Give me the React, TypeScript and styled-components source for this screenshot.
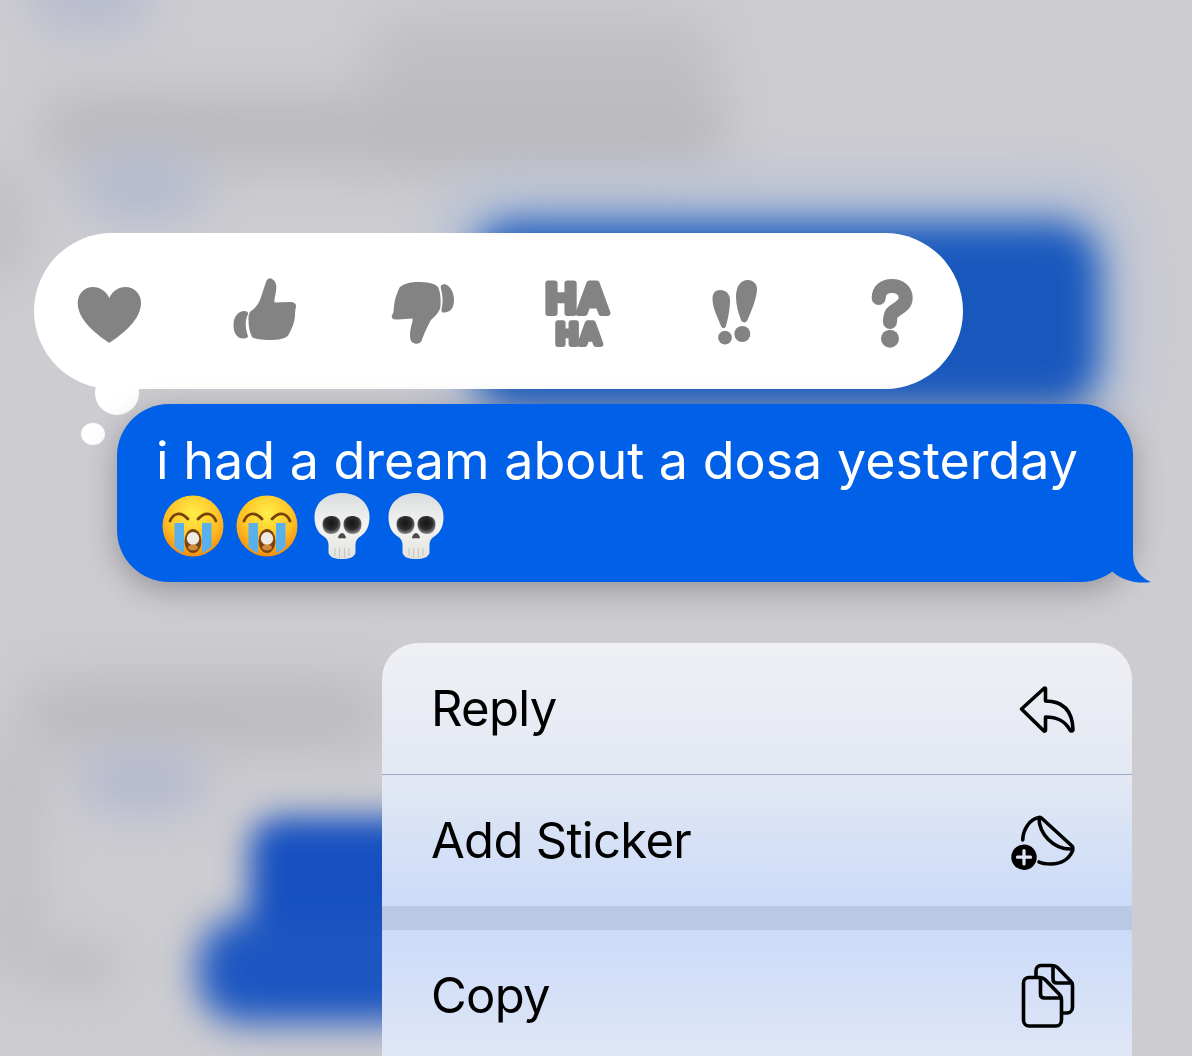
import React from "react";
import styled, { createGlobalStyle } from "styled-components";

const Global = createGlobalStyle`
  html, body { margin: 0; padding: 0; background: #cdccd1; }
  #root { width: 1192px; height: 1056px; overflow: hidden; }
`;

const Page = styled.div`
  position: relative;
  width: 1192px;
  height: 1056px;
  overflow: hidden;
  background: #cdccd1;
  font-family: Inter, "Liberation Sans", sans-serif;
`;

const Backdrop = styled.div`
  position: absolute;
  inset: 0;
  overflow: hidden;
`;

const Blob = styled.div<{ $x: number; $y: number; $w: number; $h: number; $c: string; $b: number; $r?: number }>`
  position: absolute;
  left: ${(p) => p.$x}px;
  top: ${(p) => p.$y}px;
  width: ${(p) => p.$w}px;
  height: ${(p) => p.$h}px;
  background: ${(p) => p.$c};
  filter: blur(${(p) => p.$b}px);
  border-radius: ${(p) => p.$r ?? 30}px;
`;

const Foreground = styled.div`
  position: relative;
  display: flex;
  flex-direction: column;
  align-items: flex-start;
  padding: 233px 0 0 34px;
`;

const Tapbacks = styled.div`
  position: relative;
  box-sizing: border-box;
  display: flex;
  align-items: center;
  gap: 84px;
  width: 929px;
  height: 156px;
  padding: 2px 0 0 40px;
  border-radius: 78px;
  background: #fff;
`;

const TapIcon = styled.svg`
  display: block;
  width: 72px;
  height: 72px;
  flex: none;
  overflow: visible;
  fill: #838383;
  will-change: transform;
`;

const HaText = styled.text`
  font-family: "Liberation Sans", Arial, sans-serif;
  font-weight: 700;
  fill: #838383;
  stroke: #838383;
  stroke-width: 6px;
  stroke-linejoin: round;
  text-rendering: geometricPrecision;
`;

const ThoughtLarge = styled.div`
  position: absolute;
  left: 61px;
  top: 138px;
  width: 44px;
  height: 44px;
  border-radius: 50%;
  background: #fff;
`;

const ThoughtSmall = styled.div`
  position: absolute;
  left: 47px;
  top: 190px;
  width: 24px;
  height: 22px;
  border-radius: 50%;
  background: #fff;
`;

const Bubble = styled.div`
  position: relative;
  box-sizing: border-box;
  width: 1016px;
  height: 178px;
  margin: 15px 0 0 83px;
  padding: 27px 0 0 39px;
  border-radius: 52px;
  background: #0060e8;
  box-shadow: 0 8px 30px rgba(40, 40, 50, 0.34);
  color: #fff;
`;

const BubbleText = styled.div`
  font-size: 52px;
  line-height: 60px;
  letter-spacing: 0;
  white-space: nowrap;
`;

const EmojiRow = styled.div`
  display: flex;
  gap: 12.5px;
  margin: 1px 0 0 5.5px;
`;

const EmojiIcon = styled.svg`
  display: block;
  width: 62px;
  height: 68px;
  flex: none;
`;

const Tail = styled.svg`
  position: absolute;
  left: 988px;
  top: 131px;
  width: 48px;
  height: 49px;
  overflow: visible;
  fill: #0060e8;
`;

const Menu = styled.div`
  width: 750px;
  height: 413px;
  margin: 61px 0 0 348px;
  border-radius: 36px 36px 0 0;
  overflow: hidden;
  background: linear-gradient(180deg, #eff0f4 0, #e3e8f3 131px, #cbdbf9 263px, #cbdbf9 287px, #dfe6f6 413px);
`;

const MenuRow = styled.div<{ $divider?: boolean }>`
  box-sizing: content-box;
  display: flex;
  align-items: center;
  justify-content: space-between;
  height: 131px;
  padding: 0 53px 0 49px;
  border-bottom: ${(p) => (p.$divider ? "1px solid #9aa8c4" : "none")};
  color: #000;
  font-size: 49px;
  letter-spacing: -0.7px;
`;

const MenuGap = styled.div`
  height: 24px;
  background: #bac9e3;
`;

const MenuIcon = styled.svg`
  display: block;
  width: 64px;
  height: 64px;
  flex: none;
  overflow: visible;
  fill: none;
  stroke: #000;
  stroke-width: 3.6;
  stroke-linecap: round;
  stroke-linejoin: round;
`;

const Cry = ({ id }: { id: string }) => (
  <EmojiIcon viewBox="0 0 62 68" aria-label="loudly crying face">
    <defs>
      <radialGradient id={`face${id}`} cx="0.5" cy="0.3" r="0.75">
        <stop offset="0" stopColor="#ffee48" />
        <stop offset="0.55" stopColor="#ffc326" />
        <stop offset="1" stopColor="#f48408" />
      </radialGradient>
    </defs>
    <circle cx="31" cy="34" r="30.500" fill={`url(#face${id})`} />
    <path d="M12.500 31h9.500v30c-4-1.500-7-3.500-9.500-6.500z" fill="#58b0ec" />
    <path d="M40 31h9.500v23.500c-2.500 3-5.500 5-9.500 6.500z" fill="#58b0ec" />
    <path d="M8 29c3-7 10-11 18-2M54 29c-3-7-10-11-18-2" fill="none" stroke="#75410a" strokeWidth="2.800" strokeLinecap="round" />
    <ellipse cx="31" cy="49" rx="8.500" ry="12" fill="#7a4414" />
    <ellipse cx="31" cy="46.500" rx="6.200" ry="6.500" fill="#efeae2" />
    <ellipse cx="31" cy="55.500" rx="5" ry="3" fill="#cf8a3a" />
  </EmojiIcon>
);

const Skull = ({ id }: { id: string }) => (
  <EmojiIcon viewBox="0 0 62 68" aria-label="skull">
    <defs>
      <linearGradient id={`bone${id}`} x1="0" y1="0" x2="0" y2="1">
        <stop offset="0" stopColor="#d9dcdd" />
        <stop offset="0.5" stopColor="#f4f4f2" />
        <stop offset="1" stopColor="#e2e2df" />
      </linearGradient>
      <radialGradient id={`eye${id}`} cx="0.48" cy="0.4" r="0.65">
        <stop offset="0" stopColor="#141414" />
        <stop offset="0.55" stopColor="#2e2e2e" />
        <stop offset="1" stopColor="#a0a0a0" />
      </radialGradient>
    </defs>
    <path
      d="M31 1C46 1 58.500 10 58.500 25C58.500 33 56 40 50 44C45.500 47 45 49 44.500 52L44.500 61C43 65.500 38 67 31 67C24 67 19 65.500 17.500 61L17.500 52C17 49 16.500 47 12 44C6 40 3.500 33 3.500 25C3.500 10 16 1 31 1Z"
      fill={`url(#bone${id})`}
    />
    <path d="M11.500 32C11.500 26 16 24 21 24C26 24 29.500 27 29.500 32C29.500 38 26 42 20 42C14.500 42 11.500 38 11.500 32Z" fill={`url(#eye${id})`} />
    <path d="M50.500 32C50.500 26 46 24 41 24C36 24 32.500 27 32.500 32C32.500 38 36 42 42 42C47.500 42 50.500 38 50.500 32Z" fill={`url(#eye${id})`} />
    <path d="M31 41c1.800 0 3.500 2.500 4 4.500 0 1-2.800 1.200-4 .5-1.200.7-4 .5-4-.5.5-2 2.200-4.500 4-4.500z" fill="#4a4a4a" />
    <path d="M24 56v8M28.500 56v10M33.500 56v10M38 56v8" stroke="#c4c4c1" strokeWidth="1.100" />
  </EmojiIcon>
);

export default function App() {
  return (
    <Page>
      <Global />
      <Backdrop>
        <Blob $x={30} $y={-40} $w={120} $h={70} $c="#b6bacd" $b={24} />
        <Blob $x={370} $y={15} $w={345} $h={140} $c="#c0bfc3" $b={26} />
        <Blob $x={40} $y={95} $w={680} $h={70} $c="#bab9bd" $b={26} />
        <Blob $x={80} $y={155} $w={125} $h={65} $c="#b4bace" $b={24} />
        <Blob $x={-40} $y={170} $w={70} $h={110} $c="#c0bfc3" $b={22} />
        <Blob $x={440} $y={180} $w={690} $h={250} $c="#b6c1d6" $b={26} $r={60} />
        <Blob $x={472} $y={222} $w={628} $h={186} $c="#1858bd" $b={18} $r={44} />
        <Blob $x={20} $y={680} $w={365} $h={70} $c="#bbbabe" $b={26} />
        <Blob $x={80} $y={755} $w={125} $h={55} $c="#b2b7ce" $b={24} />
        <Blob $x={-10} $y={740} $w={50} $h={240} $c="#c0bfc3" $b={22} />
        <Blob $x={30} $y={940} $w={90} $h={50} $c="#bfbec2" $b={22} />
        <Blob $x={250} $y={817} $w={200} $h={150} $c="#1650c0" $b={16} />
        <Blob $x={198} $y={918} $w={250} $h={105} $c="#1c56c1" $b={18} $r={44} />
      </Backdrop>
      <Foreground>
        <Tapbacks>
          <ThoughtLarge />
          <ThoughtSmall />
          <TapIcon viewBox="0 0 72 72" aria-label="heart">
            <path d="M35.300 67C30 63 3.700 47 3.700 27C3.700 18 10 11 19 11C26 11 32 15 35.300 22C38.600 15 44 11 51.500 11C60.500 11 67 18 67 27C67 47 40.600 63 35.300 67Z" />
          </TapIcon>
          <TapIcon viewBox="0 0 72 72" aria-label="thumbs up">
            <path d="M14 35C9 35 3.500 40 3.500 49C3.500 57 7 62.500 13 62.500C15 62.500 18 62 18 60C15 52 15 44 18 38C18.500 36 16.500 35 14 35Z" />
            <path d="M36 6C37.500 2.500 40 1.500 42 3C46 5 47 10 46 15C45.500 19 44 23 44.500 26.500L60 26C64.500 26 66.500 28 66 31C65.500 33 65 35 65 40C64.500 47 62 52 58.500 59C56 63 47 64 40 64C32 64 24 63 22 61C19.500 56 18.500 50 18.500 44C18.500 39 19 37 21 35C24 33 28 29 30 24C32 18 34 12 36 6Z" />
          </TapIcon>
          <TapIcon viewBox="0 0 72 72" aria-label="thumbs down">
            <path d="M14 11C19 7 26 6 32 6C40 6 49 7 52 11C54.500 16 55 24 54.500 30C54 36 49 40 45 44C42 49 38 58 35.500 65C33.500 68.500 29 68.500 26 66C23 63 24 56 25 51C26 47 27 45 26.500 42.500L12 43.500C7 44 5 42 6 39C8 37 7.500 33 8 30C8.500 25 9.500 21 11 18C12 15 12.500 13 14 11Z" />
            <path d="M56 9C54.500 9 54.500 11 55 13C57 20 57 28 55.500 33C55 36 56.500 37 59 36.500C65 36 68 31 68 24C68 15 63 8.500 58 8Z" />
          </TapIcon>
          <TapIcon viewBox="0 0 72 72" aria-label="ha ha">
            <HaText x="35.500" y="36.500" fontSize="43" textAnchor="middle" letterSpacing="1">HA</HaText>
            <HaText x="37.500" y="67.500" fontSize="30" textAnchor="middle" letterSpacing="1.500">HA</HaText>
          </TapIcon>
          <TapIcon viewBox="0 0 72 72" aria-label="exclamation marks">
            <path d="M22 14C28 14 32 18 32 24C32 33 30 43 28 50C27 53 24 53 23 50C20 42 14.500 32 14.500 23C14.500 17 17.500 14 22 14Z" />
            <circle cx="27" cy="61.700" r="6.900" />
            <path d="M49 4C55 3.500 59.500 8 59 14C58.500 23 53 36 49.500 44C48 47.500 44 47 43 44C40 36 38 29 38 21C38 11 42 4.500 49 4Z" />
            <circle cx="44.300" cy="58" r="8" />
          </TapIcon>
          <TapIcon viewBox="0 0 72 72" aria-label="question mark">
            <path
              d="M24.700 22C24.700 14 30 10 38 10C46 10 51.700 15 51.700 22C51.700 30 43 32 38 37C36.500 39 36 42 36 46"
              fill="none"
              stroke="#838383"
              strokeWidth="14"
              strokeLinecap="round"
            />
            <circle cx="36" cy="62.700" r="9" />
          </TapIcon>
        </Tapbacks>
        <Bubble>
          <BubbleText>i had a dream about a dosa yesterday</BubbleText>
          <EmojiRow>
            <Cry id="a" />
            <Cry id="b" />
            <Skull id="a" />
            <Skull id="b" />
          </EmojiRow>
          <Tail viewBox="0 0 48 49">
            <path d="M28 -5V20C28 33 36 43 46 47C33 49 17 46 6.700 36L6 -5Z" />
          </Tail>
        </Bubble>
        <Menu>
          <MenuRow $divider>
            <span>Reply</span>
            <MenuIcon viewBox="0 0 64 64" aria-label="reply">
              <path d="M6.500 32L29.500 11C30 11 30.500 11.500 30.500 12V24C46 24 57 31 58 52C58 54.500 56 54.500 55 53C50 44 43 40 30.500 40V53C30.500 54 29.500 54.500 29 54Z" />
            </MenuIcon>
          </MenuRow>
          <MenuRow>
            <span>Add Sticker</span>
            <MenuIcon viewBox="0 0 64 64" aria-label="add sticker">
              <path d="M7.700 31C8 20 15 10 24 8.500C25 8 26 8.500 27 9.500L57 37C58 38 58 40 57.500 42C54 50 46 55 36 55C31 55 27 54.500 24 53" />
              <path d="M24 9C24 24 38 41 57 40" />
              <circle cx="9" cy="48.200" r="12.700" fill="#000" stroke="none" />
              <path d="M9 41.500V55M2.500 48.200H15.500" stroke="#e0e6f6" strokeWidth="3.200" />
            </MenuIcon>
          </MenuRow>
          <MenuGap />
          <MenuRow>
            <span>Copy</span>
            <MenuIcon viewBox="0 0 64 64" aria-label="copy">
              <path d="M14 13.500H25C27 13.500 28.500 14 30 15.500L44.500 30.500C46 32 46.500 33.500 46.500 35.500V56C46.500 59.500 44 62 41 62H14C11 62 8.500 59.500 8.500 56V19C8.500 16 11 13.500 14 13.500Z" />
              <path d="M25.500 14V30C25.500 32.500 27 34 29.500 34H46" />
              <path d="M21 13V7C21 3.500 23 1.500 26 1.500H37C39 1.500 41 2 42.500 3.500L55.500 17C57 18.500 57.500 20 57.500 22V43C57.500 46.500 55 49 52 49H47" />
              <path d="M38 2V15C38 17.500 39.500 19 42 19H57" />
            </MenuIcon>
          </MenuRow>
        </Menu>
      </Foreground>
    </Page>
  );
}
